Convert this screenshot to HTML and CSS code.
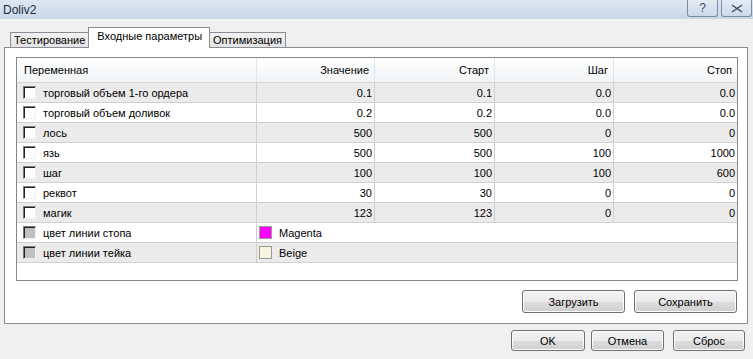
FILE: index.html
```html
<!DOCTYPE html>
<html lang="ru">
<head>
  <meta charset="UTF-8">
  <title>Doliv2</title>
  <link rel="stylesheet" href="styles.css">
</head>
<body>

  <div class="window">
    <!-- Title bar -->
    <div class="titlebar">
      <span class="title">Doliv2</span>
      <div class="caption-buttons">
        <button class="cap-btn">?</button>
        <button class="cap-btn">
          <svg width="12" height="9" viewBox="0 0 12 9"><path d="M1 1 L11 8 M11 1 L1 8" stroke="#3c4a5e" stroke-width="1.4" fill="none"/></svg>
        </button>
      </div>
    </div>

    <!-- Tabs -->
    <div class="tabs">
      <div class="tab">Тестирование</div>
      <div class="tab active">Входные параметры</div>
      <div class="tab">Оптимизация</div>
    </div>

    <div class="panel">
      <div class="grid">
        <div class="row head">
          <div class="cell name">Переменная</div>
          <div class="cell">Значение</div>
          <div class="cell">Старт</div>
          <div class="cell">Шаг</div>
          <div class="cell">Стоп</div>
        </div>
        <div class="row alt">
          <div class="cell name"><span class="check"></span>торговый объем 1-го ордера</div>
          <div class="cell">0.1</div><div class="cell">0.1</div><div class="cell">0.0</div><div class="cell">0.0</div>
        </div>
        <div class="row">
          <div class="cell name"><span class="check"></span>торговый объем доливок</div>
          <div class="cell">0.2</div><div class="cell">0.2</div><div class="cell">0.0</div><div class="cell">0.0</div>
        </div>
        <div class="row alt">
          <div class="cell name"><span class="check"></span>лось</div>
          <div class="cell">500</div><div class="cell">500</div><div class="cell">0</div><div class="cell">0</div>
        </div>
        <div class="row">
          <div class="cell name"><span class="check"></span>язь</div>
          <div class="cell">500</div><div class="cell">500</div><div class="cell">100</div><div class="cell">1000</div>
        </div>
        <div class="row alt">
          <div class="cell name"><span class="check"></span>шаг</div>
          <div class="cell">100</div><div class="cell">100</div><div class="cell">100</div><div class="cell">600</div>
        </div>
        <div class="row">
          <div class="cell name"><span class="check"></span>реквот</div>
          <div class="cell">30</div><div class="cell">30</div><div class="cell">0</div><div class="cell">0</div>
        </div>
        <div class="row alt">
          <div class="cell name"><span class="check"></span>магик</div>
          <div class="cell">123</div><div class="cell">123</div><div class="cell">0</div><div class="cell">0</div>
        </div>
        <div class="row color-row">
          <div class="cell name"><span class="check disabled"></span>цвет линии стопа</div>
          <div class="cell color"><span class="swatch magenta"></span>Magenta</div>
        </div>
        <div class="row alt color-row">
          <div class="cell name"><span class="check disabled"></span>цвет линии тейка</div>
          <div class="cell color"><span class="swatch beige"></span>Beige</div>
        </div>
      </div>

      <div class="panel-buttons">
        <button class="btn wide">Загрузить</button>
        <button class="btn wide">Сохранить</button>
      </div>
    </div>

    <div class="dialog-buttons">
      <button class="btn">OK</button>
      <button class="btn cancel">Отмена</button>
      <button class="btn reset">Сброс</button>
    </div>
  </div>

</body>
</html>
```

FILE: styles.css
```css
body {
  margin: 0;
  padding: 0;
  font-family: "Liberation Sans", Arial, sans-serif;
  font-size: 11px;
  color: #000;
  background-color: #f0f0f0;
}

.window {
  width: 753px;
  height: 359px;
  overflow: hidden;
}

/* Title bar */
.titlebar {
  height: 19px;
  display: flex;
  align-items: flex-start;
  justify-content: space-between;
  background: linear-gradient(#dde7f3, #c8d7e9);
}

.title {
  font-size: 12px;
  color: #1e2b3c;
  padding: 3px 0 0 3px;
}

.caption-buttons {
  display: flex;
  gap: 3px;
  padding-right: 1px;
}

.cap-btn {
  width: 31px;
  height: 17px;
  margin: 0;
  padding: 0;
  border: 1px solid #7c8ba0;
  border-top: none;
  border-radius: 0 0 3px 3px;
  background: linear-gradient(#e4ecf5, #cbd8e8);
  color: #3c4a5e;
  font-family: "Liberation Sans", Arial, sans-serif;
  font-size: 12px;
  display: flex;
  align-items: center;
  justify-content: center;
}

/* Tabs */
.tabs {
  display: flex;
  align-items: flex-end;
  height: 20px;
  margin-top: 8px;
  padding-left: 10px;
  position: relative;
  z-index: 1;
}

.tab {
  height: 14px;
  padding: 0 3px 0 3px;
  line-height: 15px;
  font-size: 11px;
  border: 1px solid #898c95;
  border-bottom: none;
  background: linear-gradient(#f2f2f2, #e3e3e3);
}

.tab + .tab {
  margin-left: -1px;
}

.tab.active {
  height: 20px;
  line-height: 17px;
  padding: 0 7px 0 8px;
  background: #fff;
  margin-bottom: -1px;
}

/* Panel */
.panel {
  margin: 0 5px 0 4px;
  height: 266px;
  padding: 9px 9px 0 11px;
  background: #fff;
  border: 1px solid #898c95;
}

.grid {
  height: 222px;
  border: 1px solid #828790;
  background: #fff;
}

.row {
  display: grid;
  grid-template-columns: 240px 118px 120px 119px 123px;
  height: 20px;
  border-bottom: 1px solid #d0d0d0;
  box-sizing: border-box;
}

.row.alt {
  background-color: #ebebeb;
}

.row.head {
  height: 25px;
  border-bottom: 1px solid #d5d5d5;
  background: linear-gradient(#ffffff, #f3f4f6);
}

.cell {
  display: flex;
  align-items: center;
  justify-content: flex-end;
  padding-right: 2px;
  border-right: 1px solid #d0d0d0;
  white-space: nowrap;
  overflow: hidden;
}

.cell:last-child {
  border-right: none;
}

.head .cell {
  padding-right: 5px;
  border-right-color: #e3e4e6;
}

.cell.name {
  justify-content: flex-start;
  padding-left: 6px;
}

.head .cell.name {
  padding-left: 7px;
}

.color-row {
  grid-template-columns: 240px 1fr;
}

.cell.color {
  justify-content: flex-start;
  padding-left: 2px;
}

.check {
  width: 11px;
  height: 11px;
  margin-right: 7px;
  background: #fff;
  border: 1px solid;
  border-color: #7a7a7a #f0f0f0 #f0f0f0 #7a7a7a;
  box-shadow: inset 1px 1px 0 #222;
  flex-shrink: 0;
}

.check.disabled {
  background: #c0c0c0;
}

.swatch {
  width: 11px;
  height: 11px;
  margin-right: 7px;
  border: 1px solid #999;
  flex-shrink: 0;
}

.swatch.magenta {
  background: #ff00ff;
}

.swatch.beige {
  background: #f5f5dc;
}

/* Buttons */
.btn {
  width: 74px;
  height: 21px;
  margin: 0;
  padding: 0;
  font-family: "Liberation Sans", Arial, sans-serif;
  font-size: 11px;
  color: #000;
  border: 1px solid #707070;
  border-radius: 3px;
  background: linear-gradient(#f2f2f2 0%, #ebebeb 50%, #dddddd 51%, #cfcfcf 100%);
  box-shadow: inset 0 0 0 1px #fcfcfc;
}

.btn.wide {
  width: 103px;
  height: 23px;
}

.panel-buttons {
  display: flex;
  justify-content: flex-end;
  gap: 9px;
  margin-top: 9px;
  padding-right: 1px;
}

.dialog-buttons {
  display: flex;
  justify-content: flex-end;
  gap: 6px;
  padding: 6px 8px 0 0;
}

.dialog-buttons .btn.cancel {
  width: 73px;
}

.dialog-buttons .btn.reset {
  width: 72px;
  margin-left: 3px;
}
```
